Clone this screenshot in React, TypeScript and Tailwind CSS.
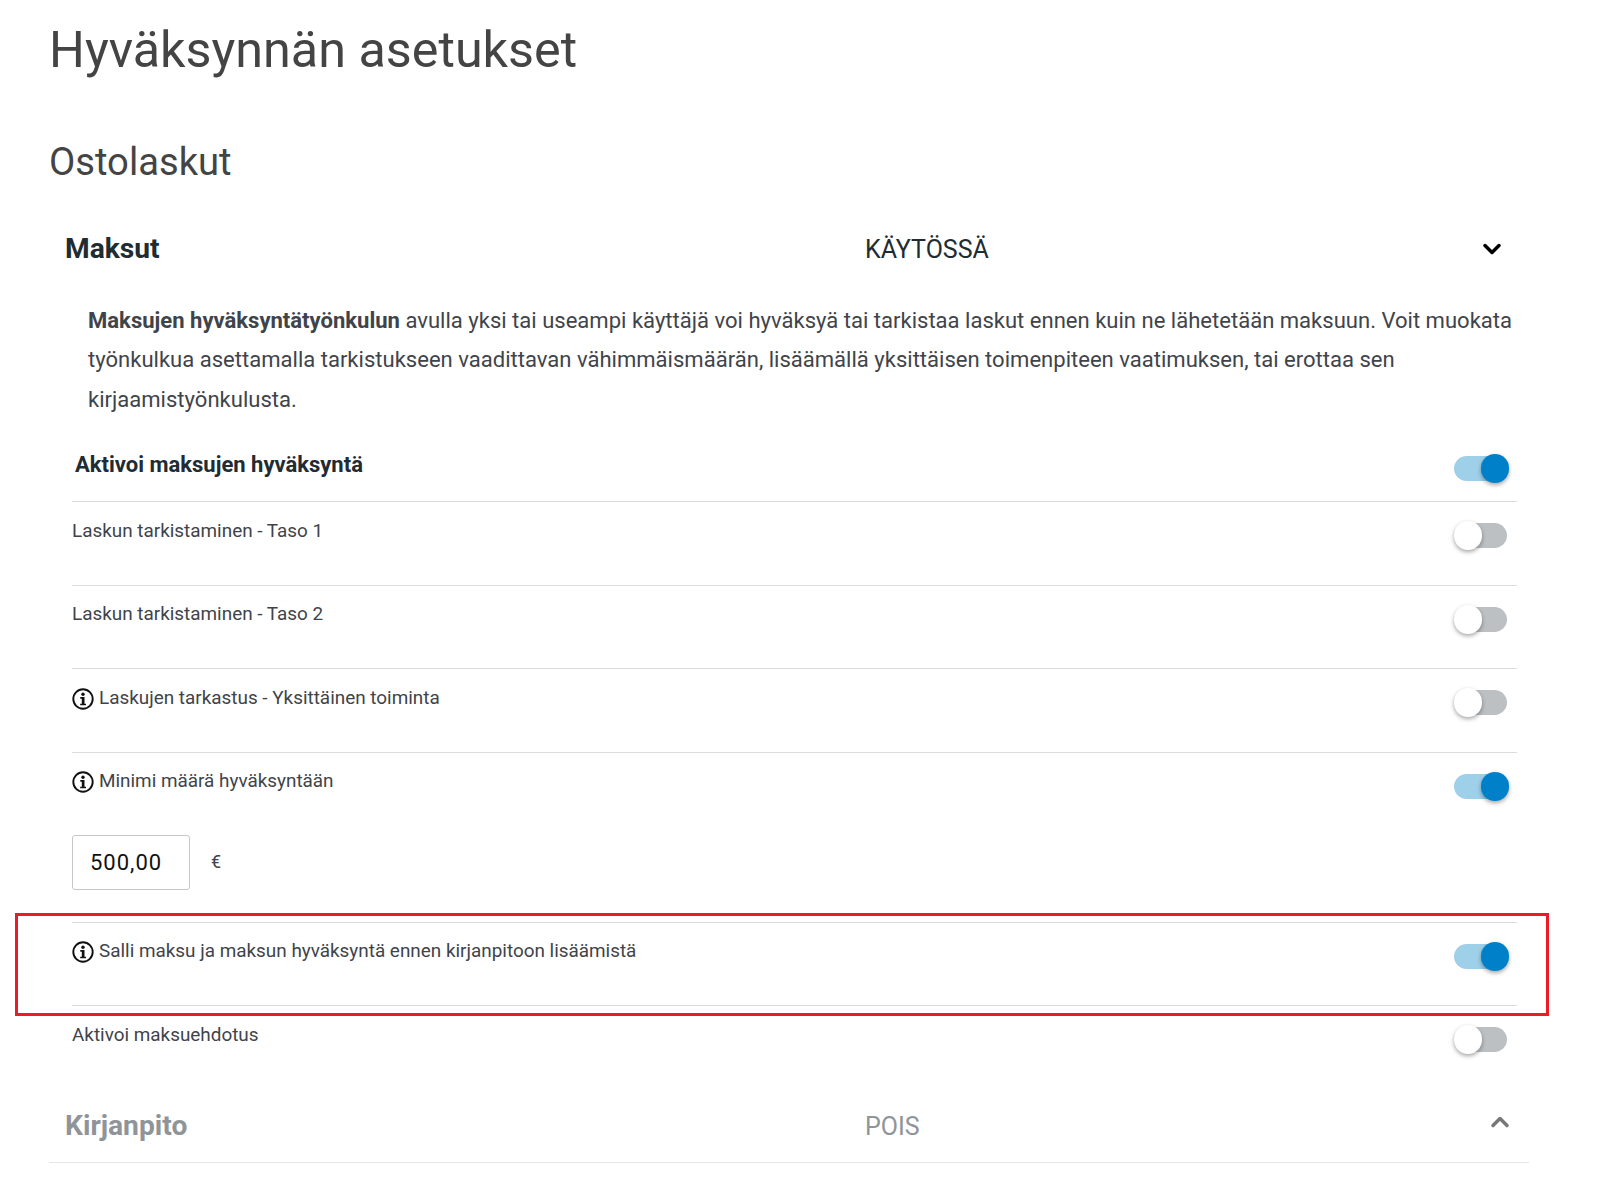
import { ChevronDown, ChevronUp } from 'lucide-react'

function Toggle({ on }: { on?: boolean }) {
  return (
    <div className={on ? 'relative h-[25px] w-[53px] rounded-full bg-[#9fd0ea]' : 'relative h-[25px] w-[53px] rounded-full bg-[#bcc0c3]'}>
      <div
        className={
          on
            ? 'absolute left-[27px] top-[-2px] h-[29px] w-[28px] rounded-full bg-[#0080c9] shadow-[0_2px_4px_rgba(0,0,0,0.35)]'
            : 'absolute left-0 top-[-2px] h-[29px] w-[28px] rounded-full bg-white shadow-[0_2px_4px_rgba(0,0,0,0.35)]'
        }
      />
    </div>
  )
}

function InfoIcon() {
  return (
    <svg width="22" height="22" viewBox="0 0 22 22" className="mr-[5px] mt-[3px] shrink-0">
      <circle cx="11" cy="11" r="9.7" fill="none" stroke="#111111" strokeWidth="1.9" />
      <circle cx="11" cy="6.3" r="1.7" fill="#111111" />
      <path d="M8.3 9.1h4.2v6.6h1.5v1.6H8.2v-1.6h1.6v-5H8.3z" fill="#111111" />
    </svg>
  )
}

function Row({ label, on, info }: { label: string; on?: boolean; info?: boolean }) {
  return (
    <div className="flex h-[83.5px] items-start justify-between border-t border-[#dcdcdc] pr-[10px]">
      <div className="flex items-start pt-[15.7px] text-[18.9px] leading-[26px] text-[#3f444a]">
        {info && <InfoIcon />}
        <span>{label}</span>
      </div>
      <div className="pt-[21px]">
        <Toggle on={on} />
      </div>
    </div>
  )
}

export default function App() {
  return (
    <div className="relative h-[1188px] overflow-hidden bg-white pl-[49px] pr-[68px] font-['Roboto',sans-serif]">
      <h1 className="pt-[17px] text-[50.3px] font-normal leading-[66px] text-[#444444]">Hyväksynnän asetukset</h1>
      <h2 className="mt-[54px] text-[38.2px] font-normal leading-[50px] text-[#444444]">Ostolaskut</h2>

      <div className="mt-[42px] flex h-[40px] items-center pl-[16px] pr-[23px]">
        <div className="w-[800px] text-[28.2px] font-bold text-[#212b32]">Maksut</div>
        <div className="mt-[2px] flex-1 text-[25px] text-[#212b32]">KÄYTÖSSÄ</div>
        <ChevronDown size={28} strokeWidth={3} className="text-black" />
      </div>

      <p className="ml-[39px] mt-[31.6px] w-[1430px] text-[22.05px] leading-[39.6px] text-[#3f444a]">
        <b className="font-bold">Maksujen hyväksyntätyönkulun</b> avulla yksi tai useampi käyttäjä voi hyväksyä tai tarkistaa laskut ennen kuin ne lähetetään maksuun. Voit muokata
        <br />
        työnkulkua asettamalla tarkistukseen vaadittavan vähimmäismäärän, lisäämällä yksittäisen toimenpiteen vaatimuksen, tai erottaa sen
        <br />
        kirjaamistyönkulusta.
      </p>

      <div className="ml-[23px] mr-[12px]">
        <div className="flex h-[81.8px] items-start justify-between pr-[10px]">
          <div className="pl-[3px] pt-[32px] text-[22px] font-bold leading-[28px] text-[#212b32]">Aktivoi maksujen hyväksyntä</div>
          <div className="pt-[37px]">
            <Toggle on />
          </div>
        </div>
        <Row label="Laskun tarkistaminen - Taso 1" />
        <Row label="Laskun tarkistaminen - Taso 2" />
        <Row label="Laskujen tarkastus - Yksittäinen toiminta" info />
        <Row label="Minimi määrä hyväksyntään" info on />
        <div className="flex h-[86.6px] items-start">
          <div className="flex h-[55px] w-[118px] items-center rounded-[3px] border border-[#c6c6c6] pl-[17px] text-[22px] tracking-[1px] text-[#111111]">500,00</div>
          <span className="ml-[21px] mt-[13px] text-[18px] text-[#3f444a]">€</span>
        </div>
        <Row label="Salli maksu ja maksun hyväksyntä ennen kirjanpitoon lisäämistä" info on />
        <Row label="Aktivoi maksuehdotus" />
      </div>

      <div className="mt-[1.5px] flex h-[73px] items-center border-b border-[#e6e6e6] pl-[16px] pr-[15px]">
        <div className="w-[800px] text-[28.2px] font-bold text-[#8f9499]">Kirjanpito</div>
        <div className="flex-1 text-[25px] text-[#8f9499]">POIS</div>
        <ChevronUp size={28} strokeWidth={3} className="mb-[8px] text-[#777777]" />
      </div>

      <div className="pointer-events-none absolute left-[15px] top-[913px] h-[103px] w-[1534px] border-[3px] border-[#ed1c24]" />
    </div>
  )
}
